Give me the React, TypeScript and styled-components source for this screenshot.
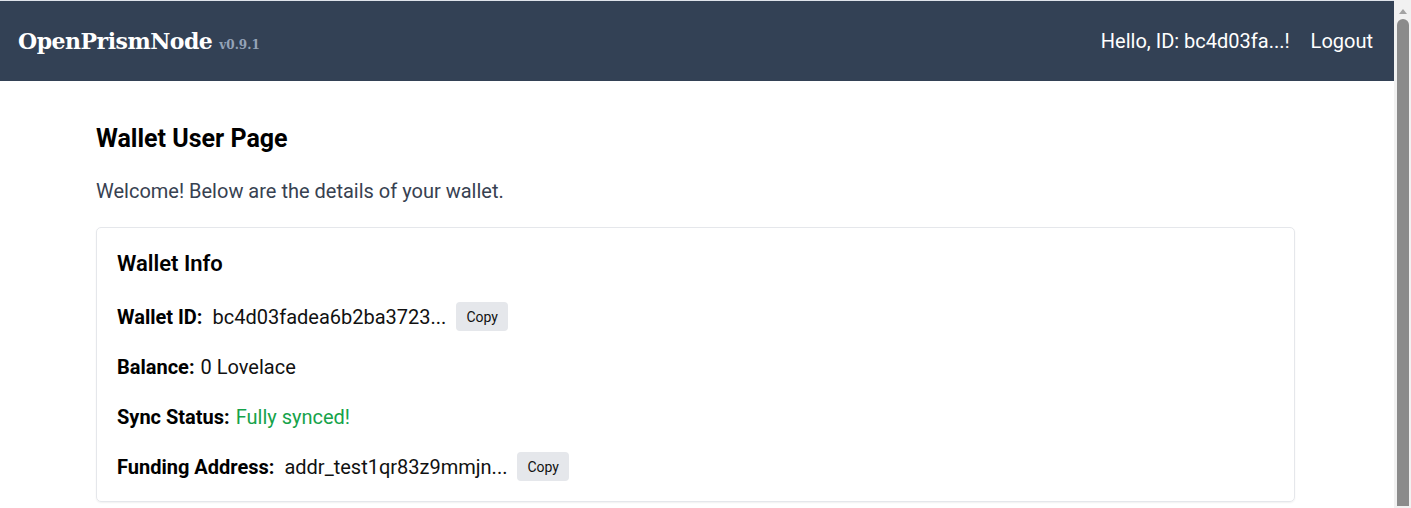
import React from "react";
import styled, { createGlobalStyle } from "styled-components";

const Global = createGlobalStyle`
  html, body { margin: 0; padding: 0; background: #ffffff; }
  body { font-family: Roboto, "Liberation Sans", sans-serif; color: #000; }
  * { box-sizing: border-box; }
`;

const Frame = styled.div`
  display: flex;
  align-items: flex-start;
`;

const Page = styled.div`
  flex: 1;
  min-width: 0;
  min-height: 560px;
  display: flex;
  flex-direction: column;
`;

const Scrollbar = styled.div`
  position: sticky;
  top: 0;
  width: 17px;
  height: 100vh;
  flex: none;
  background: #f1f1f1;
  display: flex;
  flex-direction: column;
  align-items: center;
  padding: 9px 2px 2px 3px;
  gap: 5px;
`;

const ScrollArrow = styled.div`
  width: 0;
  height: 0;
  border-left: 4px solid transparent;
  border-right: 4px solid transparent;
  border-bottom: 5px solid #a3a3a3;
`;

const ScrollThumb = styled.div`
  flex: 1;
  width: 12px;
  background: #8b8b8b;
  border-radius: 6px 6px 0 0;
`;

const Header = styled.header`
  height: 81px;
  border-top: 1px solid #dfe3ea;
  background: #334155;
  display: flex;
  align-items: center;
  justify-content: space-between;
  padding: 0 21px 0 18px;
`;

const Brand = styled.div`
  display: flex;
  align-items: baseline;
  gap: 7px;
`;

const Logo = styled.span`
  font-family: "DejaVu Serif", "Liberation Serif", serif;
  font-weight: 700;
  font-size: 22px;
  color: #ffffff;
  letter-spacing: -0.5px;
`;

const Version = styled.span`
  font-family: "DejaVu Serif", "Liberation Serif", serif;
  font-weight: 700;
  font-size: 12px;
  color: #94a3b8;
`;

const Nav = styled.nav`
  display: flex;
  align-items: center;
  gap: 21px;
  color: #ffffff;
  font-size: 20px;
`;

const NavItem = styled.span`
  color: #ffffff;
`;

const Main = styled.main`
  padding: 42px 96px 40px 96px;
`;

const Content = styled.div`
  max-width: 1199px;
  display: flex;
  flex-direction: column;
  gap: 22px;
`;

const Title = styled.h1`
  margin: 0;
  font-size: 25px;
  line-height: 32px;
  font-weight: 700;
`;

const Intro = styled.p`
  margin: 0;
  font-size: 20px;
  line-height: 28px;
  color: #374151;
`;

const Card = styled.section`
  border: 1px solid #e5e7eb;
  border-radius: 5px;
  box-shadow: 0 1px 2px rgba(0, 0, 0, 0.06);
  padding: 22px 20px 20px 20px;
  display: flex;
  flex-direction: column;
  gap: 21px;
`;

const CardTitle = styled.h2`
  margin: 0 0 3px 0;
  font-size: 22px;
  line-height: 28px;
  font-weight: 600;
`;

const Row = styled.div<{ $spaced?: boolean }>`
  min-height: 29px;
  display: flex;
  align-items: center;
  gap: ${(p) => (p.$spaced ? "10px" : "6px")};
  font-size: 20px;
`;

const Label = styled.strong`
  font-weight: 700;
`;

const Value = styled.span<{ $tone?: "ok" }>`
  color: ${(p) => (p.$tone === "ok" ? "#16a34a" : "#111111")};
`;

const CopyButton = styled.button`
  font-family: Roboto, "Liberation Sans", sans-serif;
  font-size: 14px;
  height: 29px;
  padding: 0 10px;
  border: none;
  border-radius: 4px;
  background: #e5e7eb;
  color: #111;
  cursor: pointer;
`;

export default function App() {
  return (
    <>
      <Global />
      <Frame>
        <Page>
          <Header>
            <Brand>
              <Logo>OpenPrismNode</Logo>
              <Version>v0.9.1</Version>
            </Brand>
            <Nav>
              <NavItem>Hello, ID: bc4d03fa...!</NavItem>
              <NavItem>Logout</NavItem>
            </Nav>
          </Header>
          <Main>
            <Content>
              <Title>Wallet User Page</Title>
              <Intro>Welcome! Below are the details of your wallet.</Intro>
              <Card>
                <CardTitle>Wallet Info</CardTitle>
                <Row $spaced>
                  <Label>Wallet ID:</Label>
                  <Value>bc4d03fadea6b2ba3723...</Value>
                  <CopyButton>Copy</CopyButton>
                </Row>
                <Row>
                  <Label>Balance:</Label>
                  <Value>0 Lovelace</Value>
                </Row>
                <Row>
                  <Label>Sync Status:</Label>
                  <Value $tone="ok">Fully synced!</Value>
                </Row>
                <Row $spaced>
                  <Label>Funding Address:</Label>
                  <Value>addr_test1qr83z9mmjn...</Value>
                  <CopyButton>Copy</CopyButton>
                </Row>
              </Card>
            </Content>
          </Main>
        </Page>
        <Scrollbar aria-hidden>
          <ScrollArrow />
          <ScrollThumb />
        </Scrollbar>
      </Frame>
    </>
  );
}
